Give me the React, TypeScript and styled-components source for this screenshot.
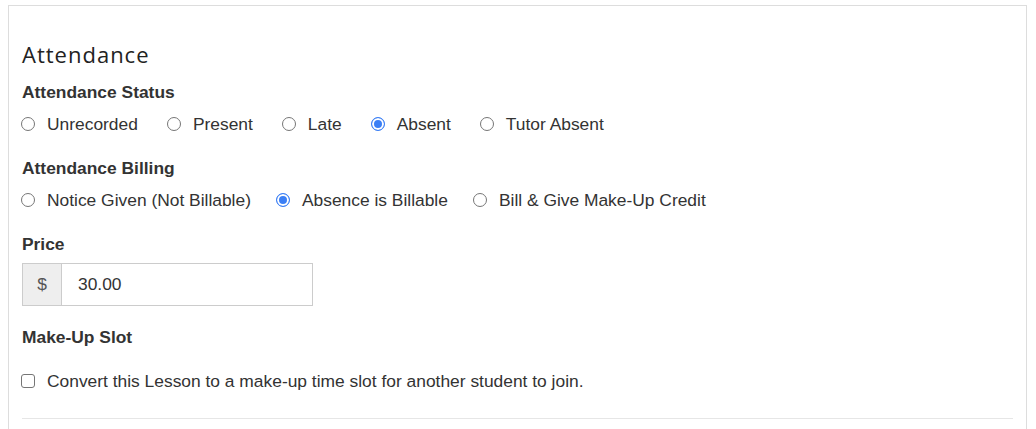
import styled, { createGlobalStyle } from "styled-components";

const GlobalStyle = createGlobalStyle`
  html, body {
    margin: 0;
    padding: 0;
    background: #fff;
  }
  body {
    font-family: "Liberation Sans", Arial, sans-serif;
    color: #333;
  }
`;

const Panel = styled.div`
  margin: 5px 0 0 8px;
  width: 1019px;
  box-sizing: border-box;
  border: 1px solid #ddd;
  border-bottom: none;
  padding: 35px 13px 10px;
  height: 424px;
`;

const Heading = styled.h3`
  margin: 0;
  font-family: "Open Sans", sans-serif;
  font-weight: 400;
  font-size: 22px;
  line-height: 26px;
  letter-spacing: 1px;
  color: #222;
`;

const FieldLabel = styled.div<{ $gap: number }>`
  margin-top: ${(p) => p.$gap}px;
  font-size: 17.4px;
  font-weight: 700;
  line-height: 24px;
  color: #333;
`;

const OptionRow = styled.div<{ $gap: number; $spacing?: number }>`
  display: flex;
  align-items: center;
  gap: ${(p) => p.$spacing ?? 30}px;
  margin-top: ${(p) => p.$gap}px;
  height: 24px;
`;

const Option = styled.label`
  display: flex;
  align-items: center;
  gap: 12px;
  font-size: 17.4px;
  line-height: 24px;
  color: #333;
  cursor: pointer;
`;

const Radio = styled.input.attrs({ type: "radio" })`
  appearance: none;
  margin: 0 0 0 -1px;
  width: 14px;
  height: 14px;
  box-sizing: border-box;
  border: 1px solid #767676;
  border-radius: 50%;
  background: #fff;

  &:checked {
    border: 1.5px solid #3b7ff5;
    background: #3b7ff5;
    box-shadow: inset 0 0 0 2px #fff;
  }
`;

const Checkbox = styled.input.attrs({ type: "checkbox" })`
  appearance: none;
  margin: 0 0 0 -1px;
  width: 14px;
  height: 14px;
  box-sizing: border-box;
  border: 1px solid #767676;
  border-radius: 3px;
  background: #fff;
`;

const InputGroup = styled.div`
  display: flex;
  margin-top: 7px;
  width: 291px;
  height: 43px;
`;

const Addon = styled.span`
  display: flex;
  align-items: center;
  justify-content: center;
  width: 40px;
  box-sizing: border-box;
  background: #eee;
  border: 1px solid #ccc;
  font-size: 17.4px;
  color: #555;
`;

const PriceInput = styled.input`
  flex: 1;
  min-width: 0;
  box-sizing: border-box;
  border: 1px solid #ccc;
  border-left: none;
  padding: 0 16px;
  font-family: "Liberation Sans", Arial, sans-serif;
  font-size: 17.4px;
  color: #333;
  outline: none;
`;

const Divider = styled.hr`
  margin: 25px 0 0;
  border: none;
  border-top: 1px solid #e6e6e6;
`;

const statuses = ["Unrecorded", "Present", "Late", "Absent", "Tutor Absent"];
const billing = [
  "Notice Given (Not Billable)",
  "Absence is Billable",
  "Bill & Give Make-Up Credit",
];

export default function App() {
  return (
    <>
      <GlobalStyle />
      <Panel>
        <Heading>Attendance</Heading>

        <FieldLabel $gap={13}>Attendance Status</FieldLabel>
        <OptionRow $gap={8}>
          {statuses.map((s) => (
            <Option key={s}>
              <Radio name="status" defaultChecked={s === "Absent"} />
              {s}
            </Option>
          ))}
        </OptionRow>

        <FieldLabel $gap={20}>Attendance Billing</FieldLabel>
        <OptionRow $gap={8} $spacing={26}>
          {billing.map((b) => (
            <Option key={b}>
              <Radio name="billing" defaultChecked={b === "Absence is Billable"} />
              {b}
            </Option>
          ))}
        </OptionRow>

        <FieldLabel $gap={20}>Price</FieldLabel>
        <InputGroup>
          <Addon>$</Addon>
          <PriceInput defaultValue="30.00" />
        </InputGroup>

        <FieldLabel $gap={19}>Make-Up Slot</FieldLabel>
        <OptionRow $gap={20}>
          <Option>
            <Checkbox />
            Convert this Lesson to a make-up time slot for another student to join.
          </Option>
        </OptionRow>

        <Divider />
      </Panel>
    </>
  );
}
